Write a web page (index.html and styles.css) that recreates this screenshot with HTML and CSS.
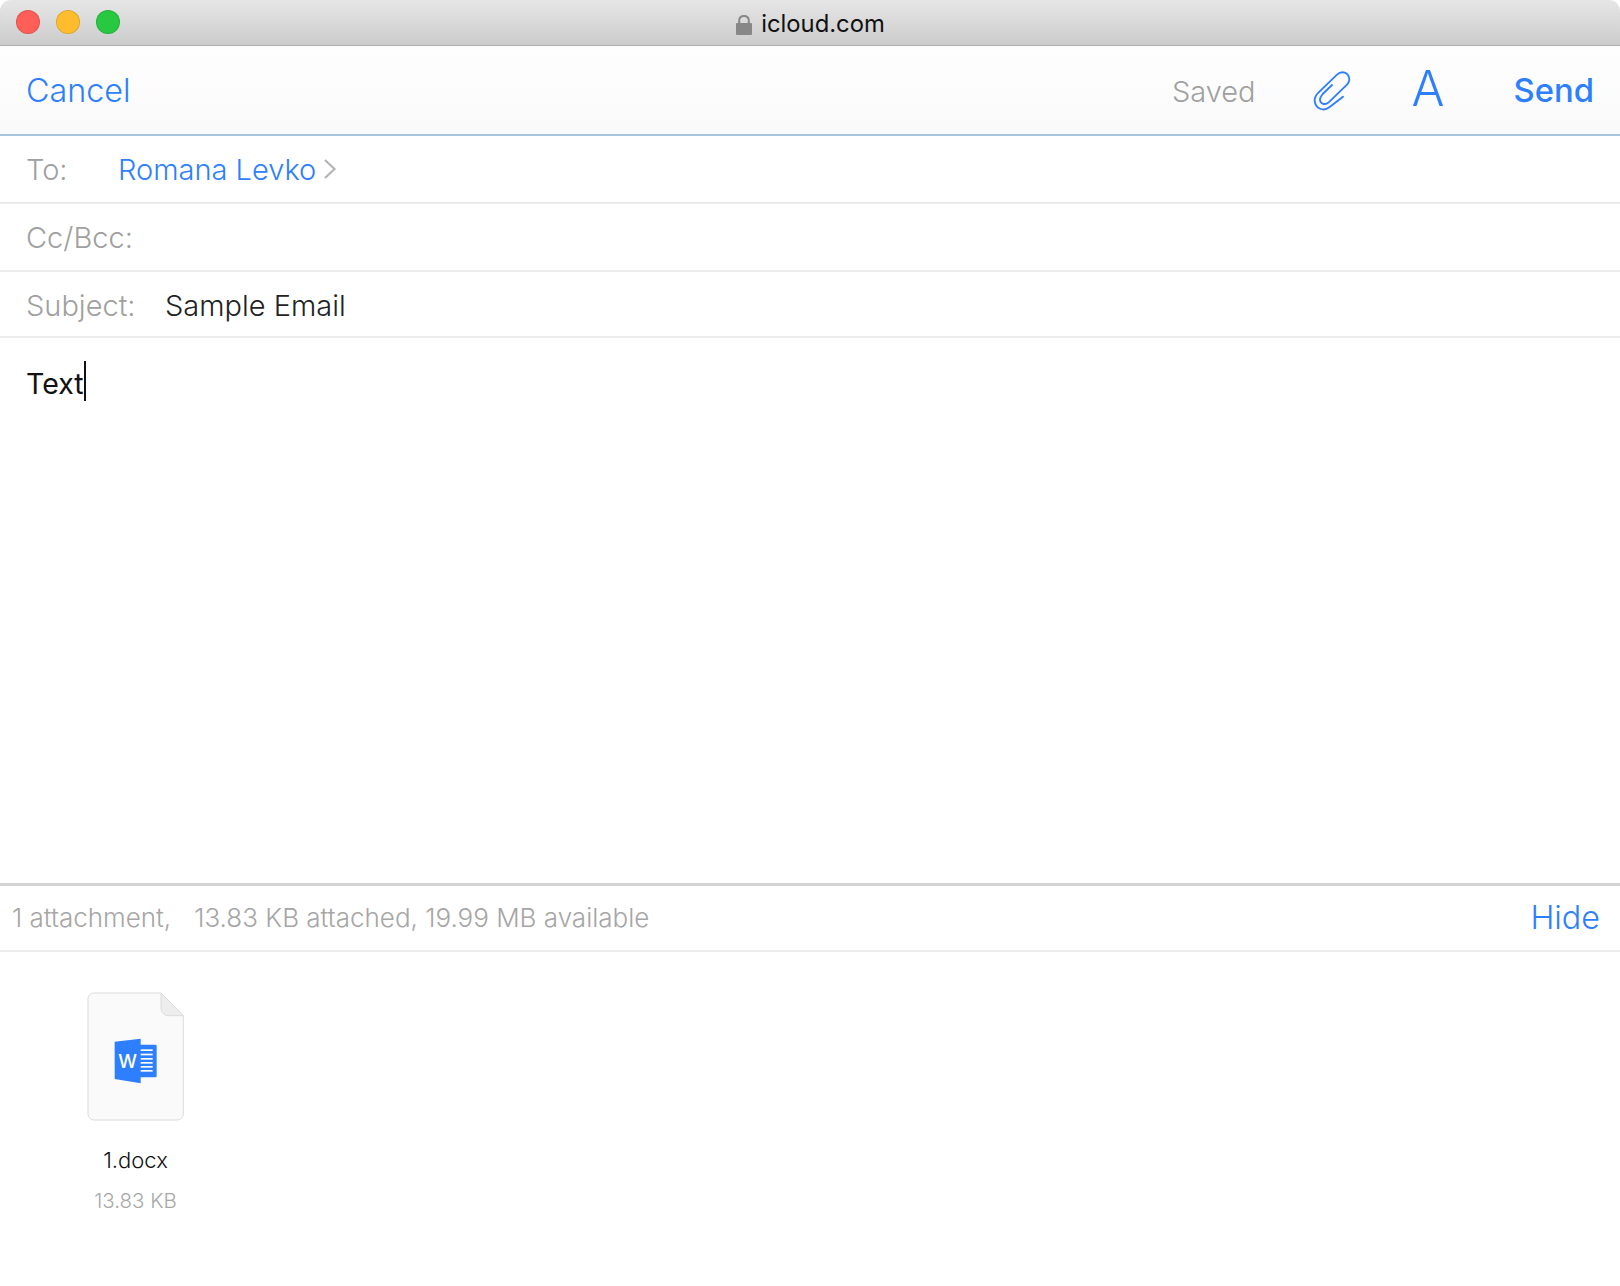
FILE: index.html
```html
<!DOCTYPE html>
<html lang="en">
<head>
<meta charset="utf-8">
<title>icloud.com</title>
<link rel="stylesheet" href="styles.css">
</head>
<body>
<div class="window">
  <header class="titlebar">
    <div class="lights">
      <span class="light red"></span>
      <span class="light yellow"></span>
      <span class="light green"></span>
    </div>
    <div class="address">
      <svg class="lock" viewBox="0 0 16 20" width="16" height="20" aria-hidden="true">
        <path d="M3.200 8.500V5.600C3.200 2.800 5.200 1 8 1s4.800 1.800 4.800 4.600V8.500" fill="none" stroke="#888" stroke-width="2"/>
        <rect x="0" y="8" width="16" height="12" rx="1" fill="#878787"/>
      </svg>
      <span class="host">icloud.com</span>
    </div>
  </header>

  <nav class="toolbar">
    <a class="cancel">Cancel</a>
    <div class="actions">
      <span class="saved">Saved</span>
      <svg class="clip" viewBox="40 25 120 125" width="40" height="41.670" aria-hidden="true">
        <path d="M133 108 L92 140 C75 153 50 145 48 120 C47 108 55 100 60 95 L115 42 C125 32 140 33 147 42 C155 52 152 65 145 72 L90 125 C80 134 65 130 64 118 C63 112 68 105 72 100 L100 73" fill="none" stroke="#2d7fff" stroke-width="5.500" stroke-linecap="round" stroke-linejoin="round"/>
      </svg>
      <span class="format">A</span>
      <a class="send">Send</a>
    </div>
  </nav>

  <div class="field">
    <span class="label label-to">To:</span>
    <span class="recipient">Romana Levko</span>
    <svg class="chevron" viewBox="0 0 14 22" width="14" height="22" aria-hidden="true">
      <path d="M2 2 L11.500 11 L2 20" fill="none" stroke="#b4b4b4" stroke-width="2.200"/>
    </svg>
  </div>
  <div class="field">
    <span class="label">Cc/Bcc:</span>
  </div>
  <div class="field field-subject">
    <span class="label label-subject">Subject:</span>
    <span class="subject">Sample Email</span>
  </div>

  <main class="body">
    <span class="text">Text</span><span class="caret"></span>
  </main>

  <div class="attach-bar">
    <span class="attach-info">1 attachment,<span class="attach-gap"></span>13.83 KB attached, 19.99 MB available</span>
    <a class="hide">Hide</a>
  </div>

  <section class="attachments">
    <figure class="file">
      <svg class="file-icon" viewBox="82 64 292 387" width="97.330" height="129" aria-hidden="true">
        <path d="M103 67 H304 L371 135 V430 A18 18 0 0 1 353 448 H103 A18 18 0 0 1 85 430 V85 A18 18 0 0 1 103 67 Z" fill="#fafafa" stroke="#dcdcdc" stroke-width="3"/>
        <path d="M304 67 L371 135 H326 A22 22 0 0 1 304 113 Z" fill="#ededed" stroke="#dcdcdc" stroke-width="3" stroke-linejoin="round"/>
        <rect x="225" y="222" width="66" height="98" rx="4" fill="#2d7fff"/>
        <path d="M165 213 L243 204 V338 L165 325 Z" fill="#2d7fff"/>
        <g fill="#fff">
          <rect x="243" y="236" width="36" height="5"/>
          <rect x="243" y="249" width="36" height="5"/>
          <rect x="243" y="262" width="36" height="5"/>
          <rect x="243" y="274" width="36" height="5"/>
          <rect x="243" y="286" width="36" height="5"/>
          <rect x="243" y="298" width="36" height="5"/>
        </g>
        <text class="word-letter" x="204" y="292" text-anchor="middle">W</text>
      </svg>
      <figcaption class="file-name">1.docx</figcaption>
      <div class="file-size">13.83 KB</div>
    </figure>
  </section>
</div>
</body>
</html>
```

FILE: styles.css
```css
* { box-sizing: border-box; }
html, body { margin: 0; padding: 0; background: #fff; }
body { font-family: Inter, "Liberation Sans", sans-serif; font-weight: 300; }

.window { width: 1620px; height: 1286px; display: flex; flex-direction: column; overflow: hidden; background: #fff; border-radius: 11px 11px 0 0; }

.titlebar { height: 46px; flex: none; display: flex; align-items: center; justify-content: center; position: relative; background: linear-gradient(#e6e6e6, #cccccc); border-bottom: 1px solid #aeaeae; }
.lights { position: absolute; left: 16px; top: 10px; display: flex; gap: 16px; }
.light { width: 24px; height: 24px; border-radius: 50%; border: 1px solid rgba(0,0,0,.12); }
.red { background: #ff5f57; }
.yellow { background: #ffbd2e; }
.green { background: #28c840; }
.address { display: flex; align-items: center; gap: 9px; padding: 2px 0 0 1px; }
.lock { display: block; margin-top: 2px; }
.host { font-size: 23.800px; font-weight: 400; color: #111; }

.toolbar { height: 90px; flex: none; display: flex; align-items: center; justify-content: space-between; padding: 0 26px; background: linear-gradient(#fefefe, #fafafa); border-bottom: 2px solid #a7c6de; }
.cancel { font-size: 32.300px; color: #2d7fff; }
.actions { display: flex; align-items: center; }
.saved { font-size: 29px; color: #a0a0a0; padding-top: 2px; }
.clip { margin-left: 56.500px; display: block; }
.format { font-size: 49px; color: #2d7fff; margin-left: 59.500px; line-height: 1; margin-top: -4px; }
.send { font-size: 32.800px; font-weight: 500; color: #2d7fff; margin-left: 69px; }

.field { height: 68px; flex: none; display: flex; align-items: center; padding-left: 26px; border-bottom: 2px solid #ebebeb; font-size: 29px; }
.field-subject { height: 66px; padding-top: 3px; }
.label { color: #a0a0a0; }
.label-to { width: 92px; }
.label-subject { width: 139px; }
.recipient { color: #2d7fff; }
.chevron { margin-left: 7px; display: block; }
.subject { color: #222; }

.body { flex: 1; padding: 23px 26px 0; font-size: 28.500px; line-height: 40px; color: #111; font-weight: 400; display: block; min-height: 0; }
.text { vertical-align: top; display: inline-block; padding-top: 3px; }
.caret { display: inline-block; width: 2px; height: 40px; background: #111; vertical-align: top; }

.attach-bar { height: 69px; flex: none; display: flex; align-items: center; justify-content: space-between; padding: 0 20px 1px 12px; border-top: 3px solid #d2d2d2; border-bottom: 2px solid #ebebeb; }
.attach-info { font-size: 26px; color: #a6a6a6; }
.attach-gap { display: inline-block; width: 23px; }
.hide { font-size: 32.300px; color: #2d7fff; }

.attachments { flex: none; height: 334px; padding: 40px 0 0 87px; }
.file { margin: 0; width: 97px; display: flex; flex-direction: column; align-items: center; }
.file-icon { display: block; flex: none; }
.file-name { margin-top: 26px; font-size: 22px; font-weight: 300; color: #111; white-space: nowrap; }
.file-size { margin-top: 15px; font-size: 20.500px; color: #a8a8a8; white-space: nowrap; }
.word-letter { font-family: Inter, "Liberation Sans", sans-serif; font-size: 56px; font-weight: 500; fill: #fff; }
```
